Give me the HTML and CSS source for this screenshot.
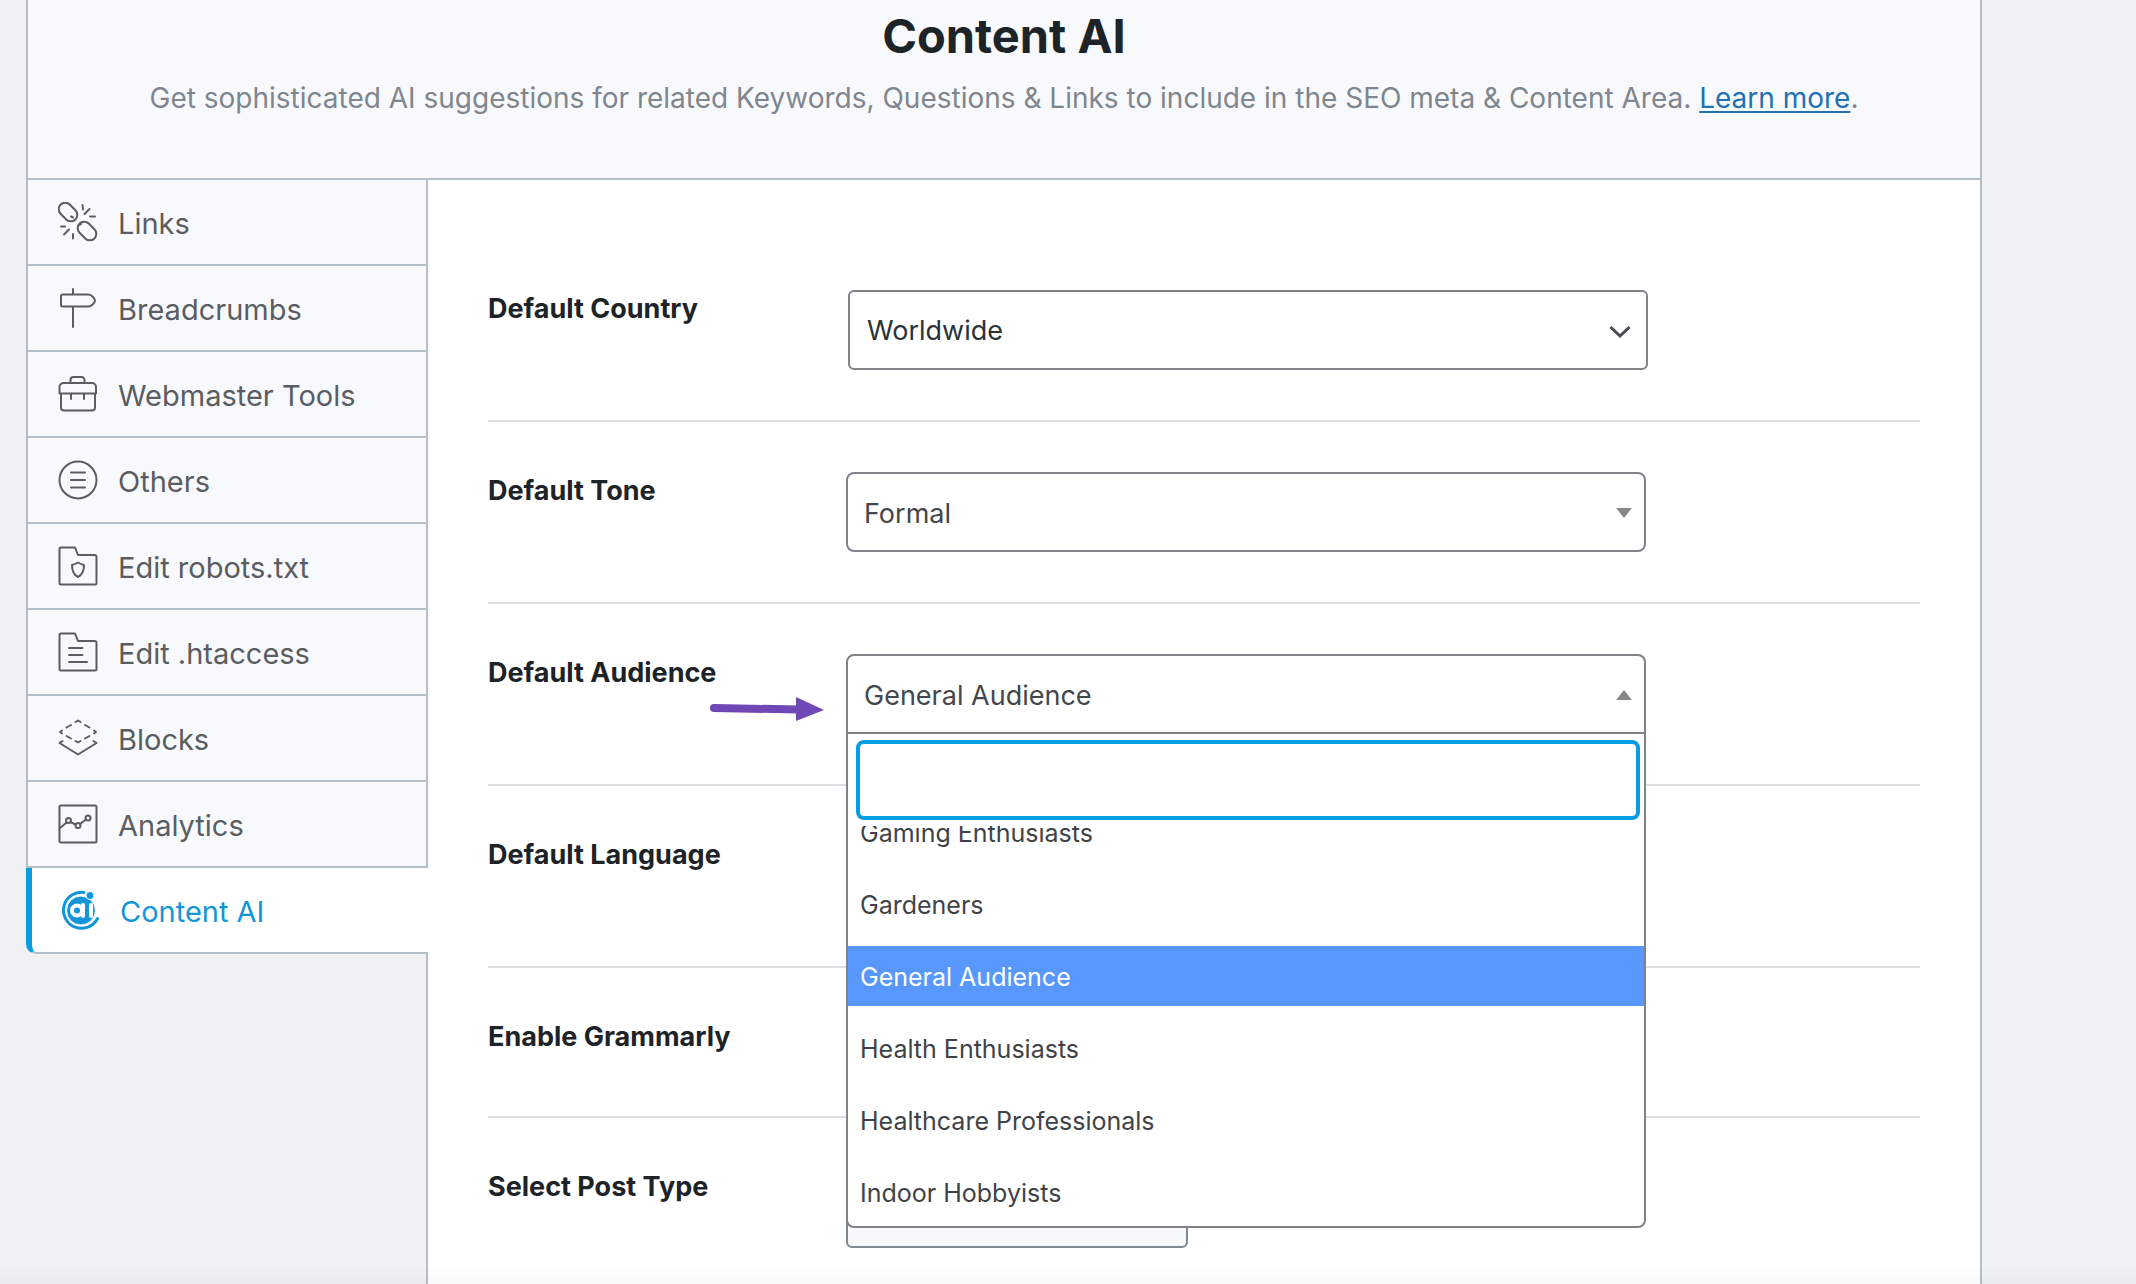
FILE: index.html
```html
<!DOCTYPE html>
<html lang="en">
<head>
    <meta charset="UTF-8">
    <meta name="viewport" content="width=device-width, initial-scale=1.0">
    <title>Content AI</title>
    <link rel="stylesheet" href="styles.css">
</head>
<body>
    <div class="panel">
        <header class="panel-header">
            <h1>Content AI</h1>
            <p>Get sophisticated AI suggestions for related Keywords, Questions &amp; Links to include in the SEO meta &amp; Content Area. <a href="#">Learn more</a>.</p>
        </header>

        <div class="panel-body">
            <nav class="tabs">
                <a href="#" class="tab">
                    <svg class="icon" viewBox="0 0 40 40">
                        <rect x="-0.500" y="3.500" width="21" height="13" rx="6.500" transform="rotate(45 10 10)"/>
                        <rect x="18.500" y="22.500" width="21" height="13" rx="6.500" transform="rotate(45 29 29)"/>
                        <path d="M13 14.500l2 1M21.500 23l1.500-1M24.500 3l.5 4.500M31.500 7l-5 5M37 14.500h-5M3 24.500h4M11 27.500l-5 5M15 32v4.500"/>
                    </svg>
                    <span>Links</span>
                </a>
                <a href="#" class="tab">
                    <svg class="icon" viewBox="0 0 40 40">
                        <path d="M15 1v5M15 18.500V39M4.500 6.500h26c3 0 6.500 4 6.500 6s-3.500 6-6.500 6h-26a1.500 1.500 0 0 1-1.500-1.500v-9a1.500 1.500 0 0 1 1.500-1.500z"/>
                    </svg>
                    <span>Breadcrumbs</span>
                </a>
                <a href="#" class="tab">
                    <svg class="icon" viewBox="0 0 40 40">
                        <path d="M12.500 9V6a3 3 0 0 1 3-3h8a3 3 0 0 1 3 3v3M13 20v5M26 20v5M3 20v13.500a3 3 0 0 0 3 3h28a3 3 0 0 0 3-3V20"/>
                        <path d="M6 9h28a4 4 0 0 1 4 4v6.500H1.500V13A4 4 0 0 1 6 9z"/>
                    </svg>
                    <span>Webmaster Tools</span>
                </a>
                <a href="#" class="tab">
                    <svg class="icon" viewBox="0 0 40 40">
                        <circle cx="20" cy="20" r="18.500"/>
                        <path d="M13 12.500h14M13 20h14M13 27.500h14"/>
                    </svg>
                    <span>Others</span>
                </a>
                <a href="#" class="tab">
                    <svg class="icon" viewBox="0 0 40 40">
                        <path d="M3 1.500h14l3 7.500h16.500a2 2 0 0 1 2 2v26a1.500 1.500 0 0 1-1.500 1.500H3A1.500 1.500 0 0 1 1.500 37V3A1.500 1.500 0 0 1 3 1.500z"/>
                        <path d="M20 16.500c2.500 1.500 4 2 6 2.500 0 6-2 10-6 12-4-2-6-6-6-12 2-.5 3.500-1 6-2.500z"/>
                    </svg>
                    <span>Edit robots.txt</span>
                </a>
                <a href="#" class="tab">
                    <svg class="icon" viewBox="0 0 40 40">
                        <path d="M3 1.500h14l3 7.500h16.500a2 2 0 0 1 2 2v26a1.500 1.500 0 0 1-1.500 1.500H3A1.500 1.500 0 0 1 1.500 37V3A1.500 1.500 0 0 1 3 1.500z"/>
                        <path d="M11 16h13.500M11 23h13.500M11 30h18"/>
                    </svg>
                    <span>Edit .htaccess</span>
                </a>
                <a href="#" class="tab">
                    <svg class="icon" viewBox="0 0 40 40">
                        <path d="M17.500 4L20 2.500 22.500 4M27 7l4.500 2.500M36 12.500l2 1.500-2 1.500M31.500 18L27 20.500M22.500 23L20 24.500 17.500 23M13 20.500L8.500 18M4 15.500L2 14l2-1.500M8.500 9.500L13 7"/>
                        <path d="M4.500 23L1.500 25 20 36.500 38.500 25l-3-2"/>
                    </svg>
                    <span>Blocks</span>
                </a>
                <a href="#" class="tab">
                    <svg class="icon" viewBox="0 0 40 40">
                        <rect x="1.500" y="1.500" width="37" height="37" rx="1.500"/>
                        <circle cx="10.500" cy="16.500" r="2.500"/>
                        <circle cx="20" cy="21.500" r="2.500"/>
                        <circle cx="30" cy="14" r="2.500"/>
                        <path d="M1.500 24.500l7-6M12.500 18l5 2.500M22 20l6-4.500"/>
                    </svg>
                    <span>Analytics</span>
                </a>
                <a href="#" class="tab active">
                    <svg class="icon" viewBox="0 0 40 40">
                        <path class="ring" d="M24 2.500A18 18 0 1 0 37.500 28.500"/>
                        <circle class="fill" cx="21" cy="20.500" r="14.500"/>
                        <circle class="fill" cx="30" cy="5.500" r="4"/>
                        <circle class="letter" cx="17" cy="20.500" r="5"/>
                        <path class="letter" d="M23 15v11M31 15v11"/>
                    </svg>
                    <span>Content AI</span>
                </a>
            </nav>

            <form class="fields">
                <div class="row">
                    <label for="country">Default Country</label>
                    <div class="control native">
                        <select id="country">
                            <option>Worldwide</option>
                        </select>
                        <svg class="chevron" viewBox="0 0 24 16"><path d="M2.500 3l9.500 9 9.500-9"/></svg>
                    </div>
                </div>
                <div class="row">
                    <label for="tone">Default Tone</label>
                    <div class="control">
                        <select id="tone">
                            <option>Formal</option>
                        </select>
                        <svg class="caret" viewBox="0 0 16 10"><path d="M0 0h16l-8 10z"/></svg>
                    </div>
                </div>
                <div class="row">
                    <label for="audience">Default Audience</label>
                    <svg class="pointer" viewBox="0 0 116 26">
                        <path d="M5 12l84 1.500" stroke="#7048b6" stroke-width="8" stroke-linecap="round"/>
                        <path d="M87 1l28 13-28 11z" fill="#7048b6"/>
                    </svg>
                    <div class="control open">
                        <select id="audience">
                            <option>General Audience</option>
                        </select>
                        <svg class="caret" viewBox="0 0 16 10"><path d="M0 10h16L8 0z"/></svg>
                        <div class="dropdown">
                            <input type="text" class="search" aria-label="Search audience">
                            <ul class="options" role="listbox" aria-label="Audience">
                                <li role="option">Gaming Enthusiasts</li>
                                <li role="option">Gardeners</li>
                                <li role="option" class="highlighted" aria-selected="true">General Audience</li>
                                <li role="option">Health Enthusiasts</li>
                                <li role="option">Healthcare Professionals</li>
                                <li role="option">Indoor Hobbyists</li>
                            </ul>
                        </div>
                    </div>
                </div>
                <div class="row">
                    <span class="label">Default Language</span>
                </div>
                <div class="row short">
                    <span class="label">Enable Grammarly</span>
                </div>
                <div class="row">
                    <span class="label">Select Post Type</span>
                    <button type="button" class="toggle-all" aria-label="Select post types"></button>
                </div>
            </form>
        </div>
    </div>
</body>
</html>
```
FILE: styles.css
```css
* {
    box-sizing: border-box;
}
body {
    margin: 0;
    background-color: #eff1f5;
    font-family: Inter, "Liberation Sans", sans-serif;
    font-size: 28px;
    color: #1d2327;
    overflow: hidden;
}
/* faint shade along the bottom of the window */
body::after {
    content: "";
    position: fixed;
    left: 0;
    right: 0;
    bottom: 0;
    height: 20px;
    background: linear-gradient(transparent, rgba(0, 0, 0, 0.02));
}
.panel {
    display: flex;
    flex-direction: column;
    min-height: 100vh;
    margin: 0 154px 0 26px;
}
.panel-header {
    padding: 6px 20px 60px;
    border: 2px solid #b5bfc9;
    border-top: none;
    background-color: #f8f9fd;
    text-align: center;
}
.panel-header h1 {
    margin: 0 0 12px;
    font-size: 47px;
    font-weight: 650;
    line-height: 60px;
}
.panel-header p {
    margin: 0;
    line-height: 40px;
    color: #7f868d;
}
.panel-header a {
    color: #2271b1;
    text-underline-offset: 3px;
}
.panel-body {
    display: flex;
    flex: 1;
}

/* side tabs */
.tabs {
    flex: 0 0 400px;
}
.tab {
    display: flex;
    align-items: center;
    gap: 20px;
    height: 86px;
    padding-left: 30px;
    border-left: 2px solid #b5bfc9;
    border-bottom: 2px solid #b5bfc9;
    background-color: #f8f9fd;
    color: #5a5d61;
    font-size: 29px;
    text-decoration: none;
}
.tab span {
    padding-top: 2px;
}
.tab.active {
    position: relative;
    margin-right: -2px;
    padding-left: 28px;
    border-left: 6px solid #069de3;
    border-bottom-left-radius: 10px;
    background-color: #fff;
    color: #1296d9;
}
.icon {
    width: 40px;
    height: 40px;
    fill: none;
    stroke: currentColor;
    stroke-width: 2;
    stroke-linecap: round;
    stroke-linejoin: round;
}
.icon .ring {
    stroke-width: 3;
}
.icon .fill {
    fill: currentColor;
    stroke: #fff;
    stroke-width: 1;
}
.icon .letter {
    stroke: #fff;
    stroke-width: 4;
}

/* settings form */
.fields {
    flex: 1;
    padding: 60px 60px 0;
    border-left: 2px solid #b5bfc9;
    border-right: 2px solid #b5bfc9;
    background-color: #fff;
}
.row {
    display: flex;
    position: relative;
    min-height: 182px;
    padding: 50px 0;
    border-bottom: 2px solid #dcdfe1;
}
.row.short {
    min-height: 150px;
}
.row:last-child {
    border-bottom: none;
}
.row label,
.row .label {
    flex: 0 0 358px;
    font-size: 27px;
    font-weight: 700;
    line-height: 38px;
}
.control {
    position: relative;
    flex: 0 1 800px;
}
.control.native {
    margin-left: 2px;
}
.control select {
    display: block;
    width: 100%;
    height: 80px;
    padding: 2px 60px 0 16px;
    border: 2px solid #7f8388;
    border-radius: 8px;
    background-color: #fff;
    color: #44474a;
    font: inherit;
    font-size: 27px;
    appearance: none;
}
.control.native select {
    padding: 0 60px 0 17px;
    border-radius: 6px;
    color: #2c3338;
}
.control.open select {
    border-radius: 8px 8px 0 0;
}
.chevron,
.caret {
    position: absolute;
    pointer-events: none;
}
.chevron {
    top: 34px;
    right: 16px;
    width: 24px;
    height: 16px;
    fill: none;
    stroke: #4a4d50;
    stroke-width: 3;
}
.caret {
    top: 36px;
    right: 14px;
    width: 16px;
    height: 10px;
    fill: #888;
}
.pointer {
    position: absolute;
    top: 92px;
    left: 221px;
    width: 116px;
    height: 26px;
    fill: none;
}
.dropdown {
    position: absolute;
    z-index: 1;
    top: 78px;
    left: 0;
    right: 0;
    border: 2px solid #7f8388;
    border-radius: 0 0 8px 8px;
    background-color: #fff;
}
.dropdown::before {
    content: "";
    display: block;
    height: 6px;
}
.search {
    display: block;
    width: calc(100% - 12px);
    height: 80px;
    margin: 0 4px 0 8px;
    border: 4px solid #069de3;
    border-radius: 8px;
    outline: none;
    font: inherit;
}
.options {
    display: flex;
    flex-direction: column;
    justify-content: flex-end;
    gap: 12px;
    height: 400px;
    margin: 6px 0 0;
    padding: 0 0 4px;
    overflow: hidden;
    list-style: none;
    color: #3f4347;
    font-size: 25px;
}
.options li {
    flex: none;
    height: 60px;
    padding: 0 12px;
    line-height: 62px;
}
.options .highlighted {
    background-color: #5897fb;
    color: #fff;
}
.toggle-all {
    width: 342px;
    height: 80px;
    border: 2px solid #7f8790;
    border-radius: 6px;
    background-color: #f6f8fc;
}
```
